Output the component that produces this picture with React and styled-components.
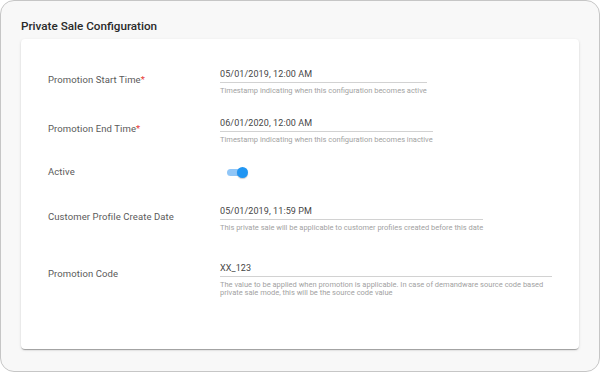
import React from "react";
import styled, { createGlobalStyle } from "styled-components";

const Global = createGlobalStyle`
  html, body { margin: 0; padding: 0; background: #fff; }
  body { font-family: Roboto, "Noto Sans", Arial, sans-serif; -webkit-font-smoothing: antialiased; }
  * { box-sizing: border-box; }
`;

const Frame = styled.div`
  width: 600px;
  height: 372px;
  border: 1px solid #c6c6c6;
  border-radius: 14px;
  background: #f8f8f8;
  padding: 17px 20px 22px;
  display: flex;
  flex-direction: column;
`;

const Title = styled.h1`
  margin: 0 0 5px;
  font-size: 11.7px;
  line-height: 16px;
  font-weight: 500;
  color: #2a2a2a;
`;

const Card = styled.div`
  flex: 1;
  background: #fff;
  border-radius: 4px;
  box-shadow: 0 2px 1px -1px rgba(0,0,0,0.2), 0 1px 1px 0 rgba(0,0,0,0.14), 0 1px 3px 0 rgba(0,0,0,0.12);
  padding: 29px 27px 0;
  display: flex;
  flex-direction: column;
`;

const Row = styled.div`
  display: flex;
  align-items: ${(p) => (p.$center ? "center" : "flex-start")};
  margin-top: ${(p) => p.$space}px;
  min-height: ${(p) => (p.$center ? 20 : 0)}px;
`;

const Label = styled.div`
  width: 172px;
  flex: none;
  font-size: 9.5px;
  line-height: 14px;
  color: #5a5a5a;
  letter-spacing: 0.1px;
  margin-top: ${(p) => (p.$center ? 0 : 5)}px;
`;

const Req = styled.span`
  color: #e53935;
`;

const Field = styled.div`
  display: inline-flex;
  flex-direction: column;
  max-width: 332px;
  width: ${(p) => (p.$wide ? "332px" : "auto")};
`;

const Value = styled.div`
  font-size: 9px;
  line-height: 12px;
  color: #464646;
  letter-spacing: 0.1px;
  padding-bottom: 2px;
  border-bottom: 1px solid #d2d2d2;
`;

const Helper = styled.div`
  margin-top: 4px;
  font-size: 7.5px;
  line-height: 8.5px;
  color: #a2a2a2;
`;

const Switch = styled.div`
  position: relative;
  margin-left: 7px;
  width: 21px;
  height: 12px;
`;

const Track = styled.div`
  position: absolute;
  left: 0;
  top: 2.5px;
  width: 18px;
  height: 7px;
  border-radius: 4px;
  background: #90c6f7;
`;

const Thumb = styled.div`
  position: absolute;
  left: 10px;
  top: 0.5px;
  width: 11px;
  height: 11px;
  border-radius: 50%;
  background: #2196f3;
  box-shadow: 0 1px 1px rgba(0,0,0,0.2);
`;

const rows = [
  { label: "Promotion Start Time", req: true, value: "05/01/2019, 12:00 AM", helper: "Timestamp indicating when this configuration becomes active", space: 0 },
  { label: "Promotion End Time", req: true, value: "06/01/2020, 12:00 AM", helper: "Timestamp indicating when this configuration becomes inactive", space: 21 },
  { label: "Active", toggle: true, space: 18 },
  { label: "Customer Profile Create Date", value: "05/01/2019, 11:59 PM", helper: "This private sale will be applicable to customer profiles created before this date", space: 23 },
  { label: "Promotion Code", value: "XX_123", helper: "The value to be applied when promotion is applicable. In case of demandware source code based private sale mode, this will be the source code value", space: 29, wide: true },
];

export default function App() {
  return (
    <>
      <Global />
      <Frame>
        <Title>Private Sale Configuration</Title>
        <Card>
          {rows.map((r) => (
            <Row key={r.label} $space={r.space} $center={r.toggle}>
              <Label $center={r.toggle}>
                {r.label}
                {r.req && <Req>*</Req>}
              </Label>
              {r.toggle ? (
                <Switch>
                  <Track />
                  <Thumb />
                </Switch>
              ) : (
                <Field $wide={r.wide}>
                  <Value>{r.value}</Value>
                  <Helper>{r.helper}</Helper>
                </Field>
              )}
            </Row>
          ))}
        </Card>
      </Frame>
    </>
  );
}
